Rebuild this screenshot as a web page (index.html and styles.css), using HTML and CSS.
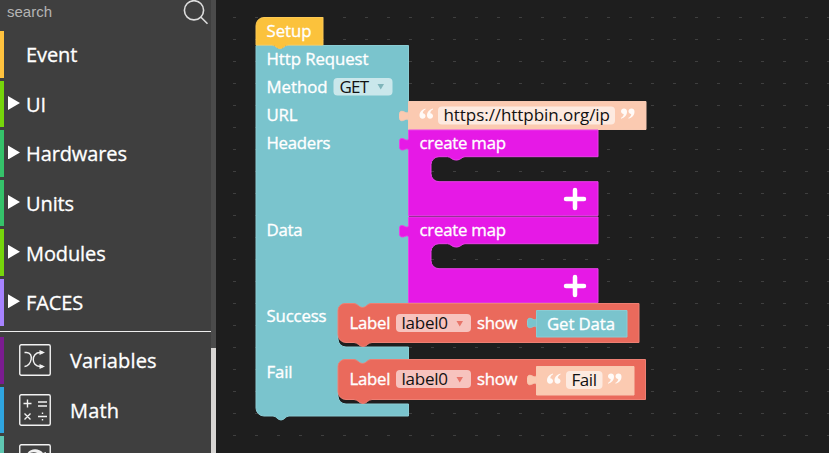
FILE: index.html
```html
<!DOCTYPE html>
<html lang="en">
<head>
<meta charset="utf-8">
<title>Block editor</title>
<link rel="stylesheet" href="styles.css">
</head>
<body>
<div class="app">
  <aside class="sidebar">
    <div class="toolbox">
      <div class="search">
        <span>search</span>
        <svg class="search-icon" width="28" height="26" viewBox="0 0 28 26"><circle cx="12" cy="10.3" r="9.6"/><path d="M19 17.3l6.5 6.5"/></svg>
      </div>
      <nav class="categories">
        <div class="category event"><i class="arrow none"></i><span>Event</span></div>
        <div class="category lime"><i class="arrow"></i><span>UI</span></div>
        <div class="category green"><i class="arrow"></i><span>Hardwares</span></div>
        <div class="category green"><i class="arrow"></i><span>Units</span></div>
        <div class="category lime"><i class="arrow"></i><span>Modules</span></div>
        <div class="category faces"><i class="arrow"></i><span>FACES</span></div>
      </nav>
      <nav class="categories core">
        <div class="category variables">
          <svg class="icon" width="32" height="32" viewBox="0 0 32 32"><rect x=".75" y=".75" width="30.5" height="30.5" rx="1.5"/><path d="M5.500 8.500h2c8 0 5 14 -2 14M24 8.500h-3c-9 0-9 14 0 14h3"/><path class="solid" d="M20.500 6l5.500 2.500-5.500 2.500zM20.500 20l5.500 2.500-5.500 2.500z"/></svg>
          <span>Variables</span>
        </div>
        <div class="category math">
          <svg class="icon" width="32" height="32" viewBox="0 0 32 32"><rect x=".75" y=".75" width="30.5" height="30.5" rx="1.500"/><path d="M4.500 9.500h8M8.500 5.500v8M19 8h9M19 12h9M5.500 19.500l6 6M11.500 19.500l-6 6M19 22.500h9M23.500 18.500v1.500M23.500 25v1.500"/></svg>
          <span>Math</span>
        </div>
        <div class="category loops">
          <svg class="icon" width="32" height="32" viewBox="0 0 32 32"><rect x=".75" y=".75" width="30.500" height="30.500" rx="1.500"/><path class="solid" d="M8 10c3-6 12-6 16-1l3-1-1 8-8-3 3-2c-4-4-8-3-13-1z"/></svg>
          <span>Loops</span>
        </div>
      </nav>
    </div>
    <div class="scrollbar"><div class="thumb"></div></div>
  </aside>
  <main class="workspace">
    <svg class="canvas" width="613" height="453" viewBox="216 0 613 453">
      <defs>
        <pattern id="grid" x="216" y="0" width="22" height="22" patternUnits="userSpaceOnUse"><path class="dot" d="M17 17.500h3"/></pattern>
        <path id="tab" d="M0 0v4c0 2-1.500 2-3 1.500-3-1.500-5.500-2-6 1v5c.5 3 3 2.500 6 1 1.500-.5 3-.5 3 1.500v3z"/>
        <path id="map" d="M408.500.500H598v26.700H465c-3 0-4.500 3.300-8 3.300h-1.500c-3.500 0-5-3.300-8-3.300H439a8 8 0 0 0-8 8v9a8 8 0 0 0 8 8h159v34H408.500v-65c0-2-1.500-2-3-1.500-3 1.500-5.500 1-6-1.500v-7c.5-3 3-2.500 6-1 1.500.5 3 .5 3-1.500z"/>
        <g id="quote"><path d="M6 0C2.500 1 0 3.500 0 7c0 2 1.200 3.200 3 3.200S6 9 6 7.500 5 5 3.300 4.700C3.300 3 4.500 1.500 6 1zM13.500 0C10 1 7.500 3.500 7.500 7c0 2 1.200 3.200 3 3.200s3-1.200 3-2.700S12.500 5 10.800 4.700c0-1.700 1.200-3.200 2.700-3.700z"/></g>
      </defs>
      <rect x="216" width="613" height="453" fill="url(#grid)"/>

      <path class="block teal" d="M256 45.500h16c3.500 0 4.500 3.500 8 3.500s4.500-3.500 8-3.500h120.500V303.500H371c-3.500 0-4.500 4-8.500 4s-5-4-8.500-4h-9a7 7 0 0 0-7 7V339a8 8 0 0 0 8 8h62.500v12.500H371c-3.500 0-4.500 4-8.500 4s-5-4-8.500-4h-9a7 7 0 0 0-7 7V396a8 8 0 0 0 8 8h62.500v12H289c-3.500 0-4.500 4-8 4s-4.500-4-8-4h-9a8 8 0 0 1-8-8z"/>
      <path class="block yellow" d="M264 17.500h59V45h-35c-3.500 0-4.500 3.500-8 3.500S275.500 45 272 45h-16V25.500a8 8 0 0 1 8-8z"/>
      <g class="label">
        <text x="266.500" y="37" textLength="45">Setup</text>
        <text x="266.500" y="65" textLength="102">Http Request</text>
        <text x="266.500" y="92.500" textLength="61">Method</text>
        <text x="266.500" y="121" textLength="31">URL</text>
        <text x="266.500" y="149" textLength="64">Headers</text>
        <text x="266.500" y="236" textLength="36">Data</text>
        <text x="266.500" y="322" textLength="60">Success</text>
        <text x="266.500" y="378" textLength="26">Fail</text>
      </g>
      <rect class="field" x="333.500" y="78" width="59" height="17.500" rx="4"/>
      <text class="value" x="339.500" y="92.500" textLength="29.500">GET</text>
      <path class="caret-teal" d="M377.500 84h6.500l-3.250 5.500z"/>

      <use class="block peach" href="#tab" x="408.500" y="107"/>
      <path class="block peach" d="M408.500 101.500h237.500v28H408.500z"/>
      <use class="quote" href="#quote" x="419.500" y="108.500"/>
      <rect class="field text-field" x="438" y="106.500" width="177" height="18" rx="4"/>
      <text class="value" x="443.500" y="121" textLength="166.500">https://httpbin.org/ip</text>
      <use class="quote" href="#quote" transform="translate(634.500 118.700) rotate(180)"/>

      <use class="block magenta" href="#map" y="129.500"/>
      <use class="block magenta" href="#map" y="216.500"/>
      <g class="label">
        <text x="419.500" y="149" textLength="86.500">create map</text>
        <text x="419.500" y="236" textLength="86.500">create map</text>
      </g>
      <path class="plus" d="M566 199h18M575 190v18M566 286h18M575 277v18"/>

      <path class="block red" d="M345 303.500h9c3.500 0 4.500 4 8.500 4s5-4 8.500-4h268v39H372c-4 0-5 4-9 4s-5-4-9-4h-8a8 8 0 0 1-8-8v-24a7 7 0 0 1 7-7z"/>
      <path class="block red" d="M345 359.500h9c3.500 0 4.500 4 8.500 4s5-4 8.500-4h274.500v40H372c-4 0-5 4-9 4s-5-4-9-4h-8a8 8 0 0 1-8-8v-25a7 7 0 0 1 7-7z"/>
      <g class="label">
        <text x="349.500" y="329" textLength="41">Label</text>
        <text x="477" y="329" textLength="40.500">show</text>
        <text x="349.500" y="385" textLength="41">Label</text>
        <text x="477" y="385" textLength="40.500">show</text>
      </g>
      <rect class="field" x="396" y="314" width="75" height="18" rx="4"/>
      <rect class="field" x="396" y="370" width="75" height="18" rx="4"/>
      <text class="value" x="401.500" y="329" textLength="46.500">label0</text>
      <text class="value" x="401.500" y="385" textLength="46.500">label0</text>
      <path class="caret-red" d="M456.500 321h6.500l-3.250 5.500zM456.500 377h6.500l-3.250 5.500z"/>

      <use class="block teal" href="#tab" x="536.500" y="314"/>
      <path class="block teal" d="M536.500 310.500h90.500v26.500h-90.500z"/>
      <text class="label" x="547" y="330" textLength="68">Get Data</text>

      <use class="block peach" href="#tab" x="536.500" y="371"/>
      <path class="block peach" d="M536.500 366.500h97.500v28.500h-97.500z"/>
      <use class="quote" href="#quote" x="547" y="373.500"/>
      <rect class="field text-field" x="566" y="371" width="36.500" height="18" rx="4"/>
      <text class="value" x="571.500" y="385.500" textLength="25.500">Fail</text>
      <use class="quote" href="#quote" transform="translate(621.500 383.700) rotate(180)"/>
    </svg>
  </main>
</div>
</body>
</html>
```
FILE: styles.css
```css
* { box-sizing: border-box; }
body { margin: 0; overflow: hidden; background: #1e1e1e; font-family: "Open Sans", "Noto Sans", sans-serif; }
.app { display: flex; height: 453px; overflow: hidden; }
.sidebar { display: flex; width: 216px; background: #3f3f3f; color: #fff; }
.toolbox { width: 211px; overflow: hidden; }
.scrollbar { width: 5px; background: #4b4b4b; padding-top: 348px; }
.thumb { height: 105px; background: #d7d5d3; }
.search { display: flex; justify-content: space-between; height: 31px; padding: 0 1px 0 7px; font: 15px/24px "Liberation Sans", sans-serif; color: #b5b5b5; }
.search-icon { fill: none; stroke: #ddd; stroke-width: 1.6; }
.categories { display: flex; flex-direction: column; gap: 3px; padding-bottom: 5.500px; }
.category { display: flex; flex: none; align-items: center; height: 46.600px; border-left: 4px solid; padding-left: 4px; font-size: 20px; line-height: 28px; letter-spacing: -.1px; }
.category span { color: #fff; padding-top: 2px; -webkit-text-stroke: .3px #fff; }
.arrow { width: 12px; height: 14px; margin: 0 6px 2px 0; background: #fff; clip-path: polygon(0 0, 100% 50%, 0 100%); }
.arrow.none { visibility: hidden; }
.event { border-color: #ffc23e; }
.lime { border-color: #76d50b; }
.green { border-color: #35c26a; }
.faces { border-color: #a783ff; }
.core { border-top: 1.500px solid #eee; padding-top: 5px; }
.core .category { padding-left: 15px; gap: 19px; }
.core .category span { letter-spacing: .15px; }
.icon { fill: none; stroke: #f2f2f2; stroke-width: 1.4; }
.icon .solid { fill: #f2f2f2; stroke: none; }
.variables { border-color: #7b1c91; }
.math { border-color: #2fa5e0; }
.loops { border-color: #5fc7b2; }
.workspace { flex: 1; }
.canvas { display: block; }
.dot { stroke: #3f3f3f; stroke-width: 1; }
.block { stroke-width: 1; }
.teal { fill: #7ac4cd; stroke: #8accd4; }
.yellow { fill: #fbc23c; stroke: #fcc954; }
.magenta { fill: #e619e6; stroke: #ea40e8; }
.peach { fill: #fbcab1; stroke: #f8c9b2; }
.red { fill: #ea6a5c; stroke: #ee7f73; }
.label { fill: #fff; stroke: #fff; stroke-width: .35; font-size: 16.800px; }
.value { fill: #111; font-size: 17px; }
.field { fill: #fff; fill-opacity: .6; }
.quote { fill: #fff; fill-opacity: .9; }
.caret-teal { fill: #7fb5ba; }
.caret-red { fill: #e8756a; }
.plus { stroke: #fff; stroke-width: 4.500; stroke-linecap: round; }
```
